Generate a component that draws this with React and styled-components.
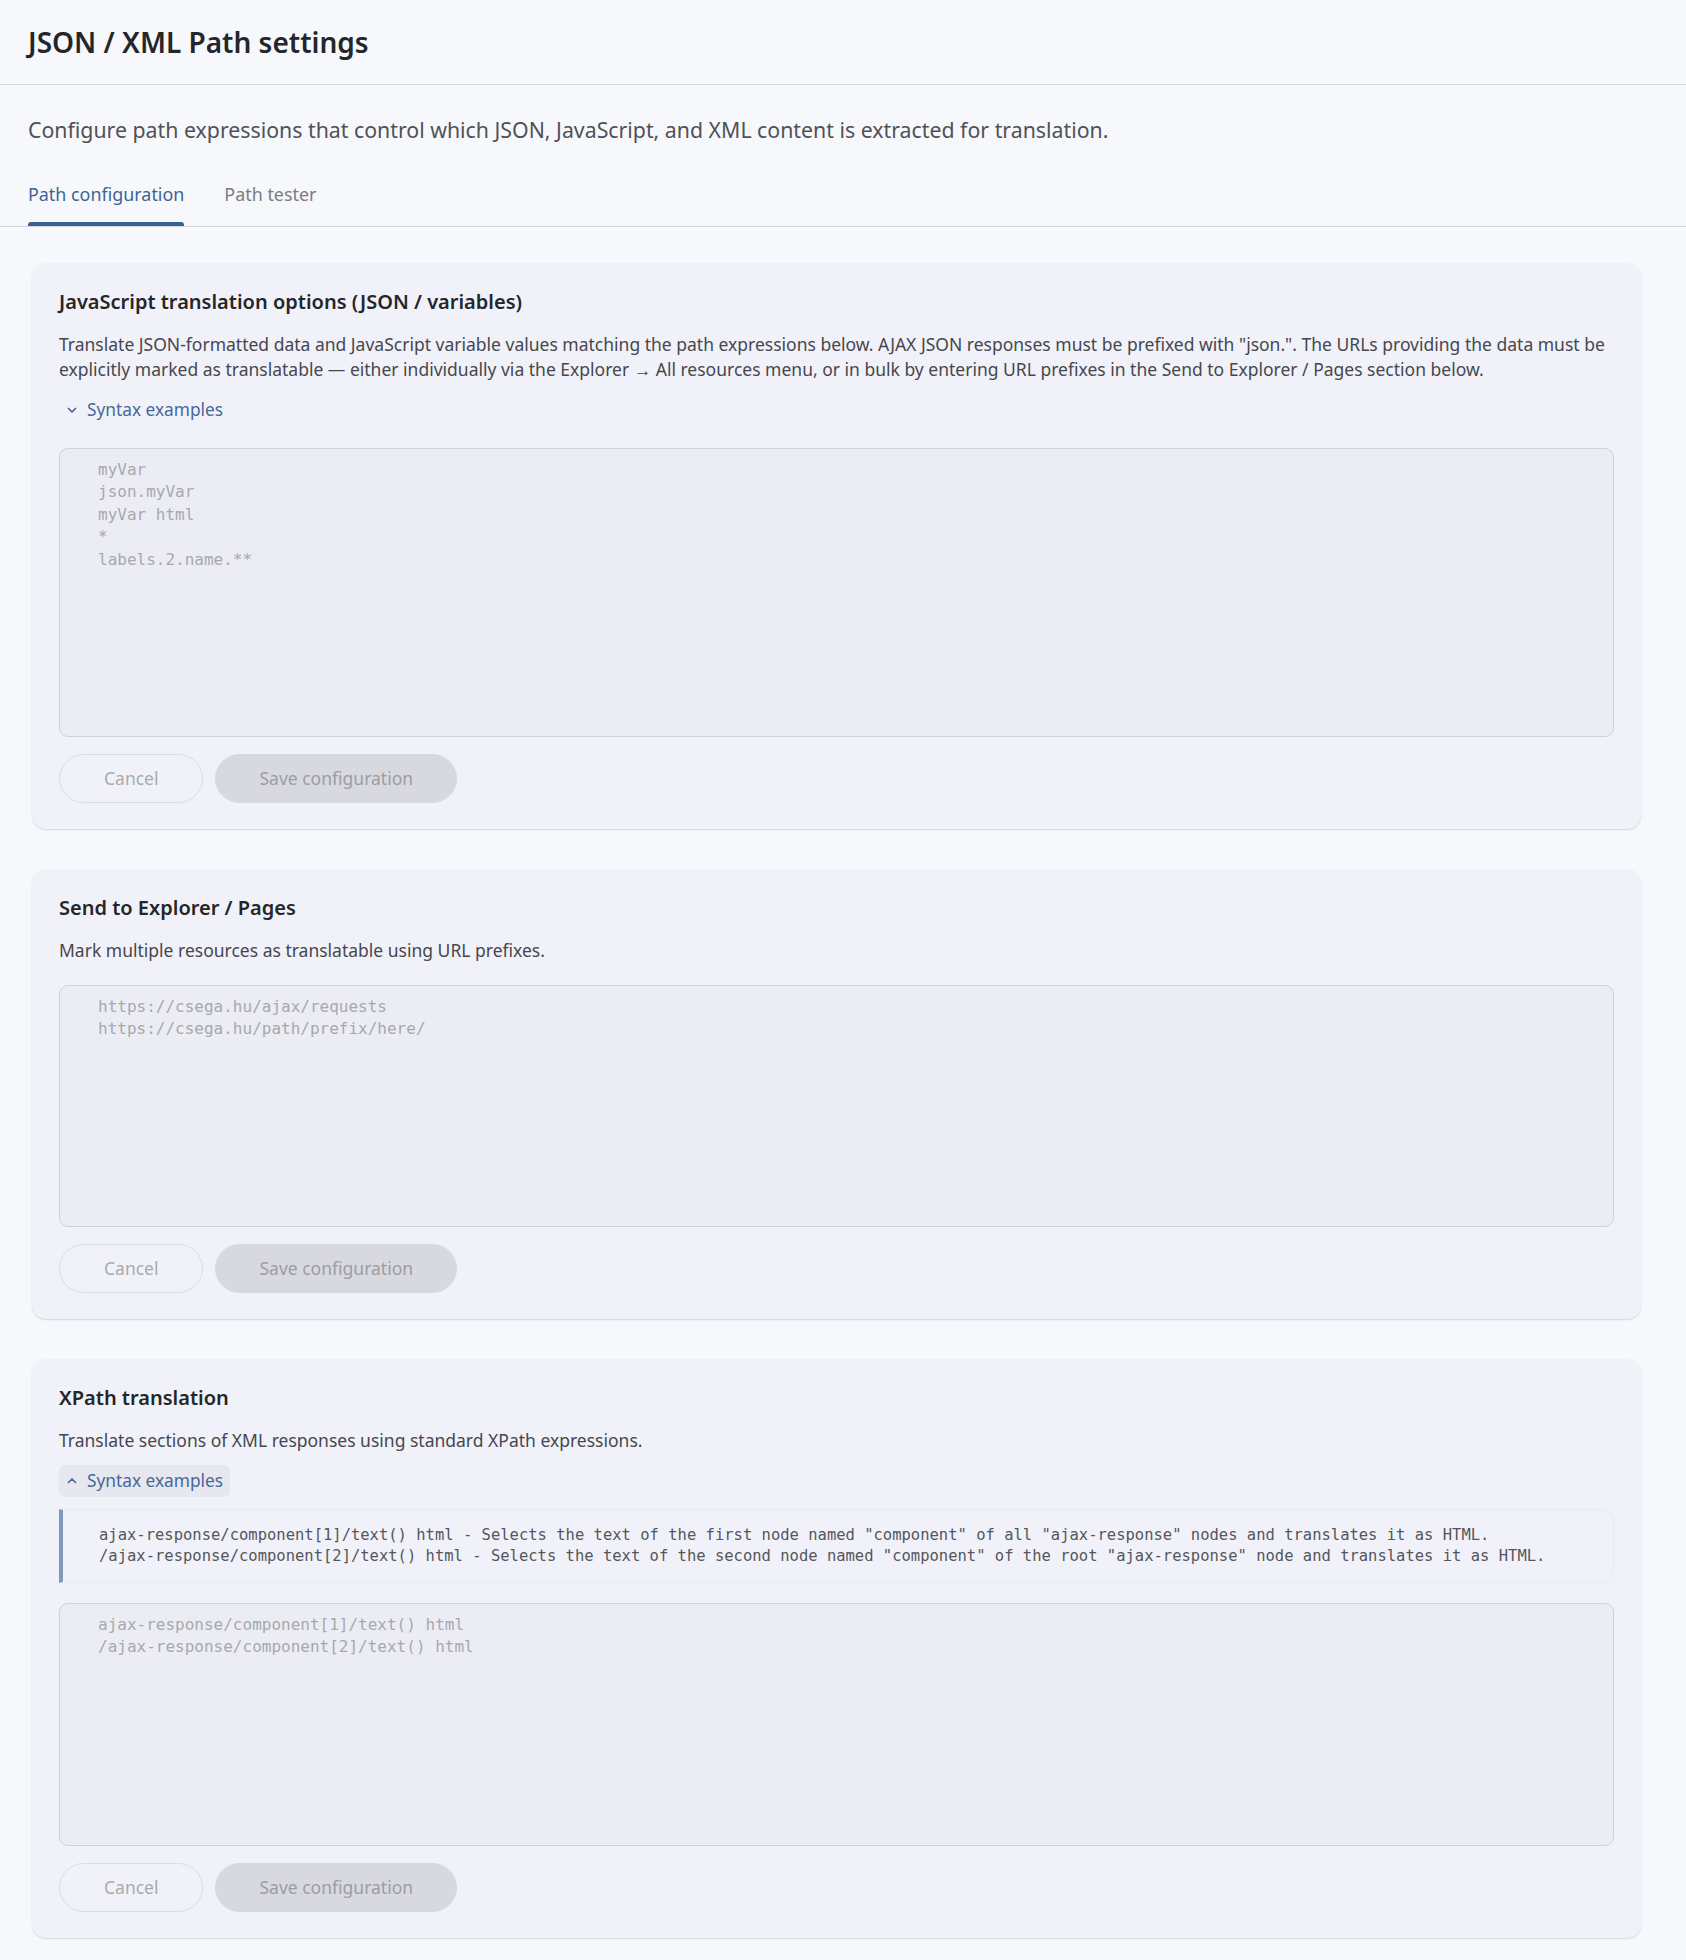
import React from "react";
import styled, { createGlobalStyle } from "styled-components";

const GlobalStyle = createGlobalStyle`
  body {
    margin: 0;
    background: #f7f8fc;
    font-family: "Noto Sans", "Open Sans", sans-serif;
    color: #2b2c30;
  }
  * { box-sizing: border-box; }
`;

const Page = styled.main`
  min-height: 1960px;
  background: #f7f8fc;
  padding-bottom: 23px;
`;

const Header = styled.header`
  height: 85px;
  display: flex;
  align-items: center;
  padding: 0 28px;
  border-bottom: 1.5px solid #d8d9e1;
  h1 {
    margin: 0;
    font-size: 28px;
    font-weight: 600;
    color: #25262a;
  }
`;

const Intro = styled.p`
  margin: 0;
  padding: 30px 28px 0;
  font-size: 21.3px;
  line-height: 30px;
  color: #505157;
`;

const Tabs = styled.nav`
  display: flex;
  gap: 40px;
  padding: 0 28px;
  margin-top: 36.5px;
  border-bottom: 1.5px solid #d3d4dc;
`;

const Tab = styled.button`
  position: relative;
  background: none;
  border: 0;
  padding: 0 0 19px;
  font-family: inherit;
  font-size: 17.9px;
  line-height: 25px;
  color: ${(p) => (p.$active ? "#3f6493" : "#7b7c83")};
  cursor: pointer;
  &::after {
    content: "";
    display: ${(p) => (p.$active ? "block" : "none")};
    position: absolute;
    left: 0;
    right: 0;
    bottom: 0;
    height: 4px;
    border-radius: 3px 3px 0 0;
    background: #3c6190;
  }
`;

const Cards = styled.div`
  display: flex;
  flex-direction: column;
  gap: 40px;
  padding: 36px 45px 0 32px;
`;

const Card = styled.section`
  background: #f1f2f9;
  border-radius: 14px;
  padding: 26px 27px 26px;
  box-shadow: 0 1px 1.5px rgba(40, 42, 60, 0.16);
`;

const CardTitle = styled.h2`
  margin: 0;
  font-size: 20px;
  line-height: 26px;
  font-weight: 600;
  color: #25262a;
`;

const CardText = styled.p`
  margin: 17px 0 0;
  font-size: 17.5px;
  line-height: 25px;
  color: #46474d;
`;

const Toggle = styled.button`
  display: inline-flex;
  align-items: center;
  gap: 9px;
  height: 32px;
  margin-top: 12px;
  padding: 0 7px;
  border: 0;
  border-radius: 6px;
  background: ${(p) => (p.$open ? "#e6e7ef" : "transparent")};
  font-family: inherit;
  font-size: 17.3px;
  color: #46689a;
  cursor: pointer;
  svg {
    width: 12px;
    height: 12px;
  }
`;

const Examples = styled.pre`
  margin: 12px 0 0;
  padding: 15px 36px;
  border: 1px solid #e9eaf2;
  border-left: 4px solid #7f9abb;
  border-radius: 0 14px 14px 0;
  font-family: "DejaVu Sans Mono", "Liberation Mono", monospace;
  font-size: 15.5px;
  line-height: 21px;
  color: #55565c;
  white-space: pre;
`;

const PathInput = styled.textarea`
  display: block;
  width: 100%;
  height: ${(p) => p.$height}px;
  margin-top: 22px;
  padding: 10px 38px;
  background: #ecedf4;
  border: 1.5px solid #d0d1db;
  border-radius: 9px;
  resize: none;
  font-family: "DejaVu Sans Mono", "Liberation Mono", monospace;
  font-size: 16px;
  line-height: 22.5px;
  color: #55565c;
  outline: none;
  ${Examples} + & {
    margin-top: 20px;
  }
  &::placeholder {
    color: #a7a8ae;
  }
`;

const Actions = styled.div`
  display: flex;
  gap: 12px;
  margin-top: 17px;
`;

const PillButton = styled.button`
  height: 49px;
  padding: 0 ${(p) => (p.$primary ? "43px" : "44px")};
  border-radius: 25px;
  font-family: inherit;
  font-size: 17.5px;
  border: 1.5px solid ${(p) => (p.$primary ? "#d8d9e0" : "#dcdde4")};
  background: ${(p) => (p.$primary ? "#d8d9e0" : "transparent")};
  color: ${(p) => (p.$primary ? "#9c9da4" : "#a9aab0")};
  cursor: not-allowed;
`;

const Chevron = ({ up }) => (
  <svg viewBox="0 0 12 12" fill="none" stroke="currentColor" strokeWidth="1.7" strokeLinecap="round" strokeLinejoin="round">
    {up ? <path d="M2.5 7.5 6 4l3.5 3.5" /> : <path d="M2.5 4.5 6 8l3.5-3.5" />}
  </svg>
);

const ConfigCard = ({ title, text, toggle, examples, placeholder, height }) => (
  <Card>
    <CardTitle>{title}</CardTitle>
    <CardText>{text}</CardText>
    {toggle && (
      <div>
        <Toggle $open={toggle === "open"}>
          <Chevron up={toggle === "open"} />
          Syntax examples
        </Toggle>
      </div>
    )}
    {examples && <Examples>{examples}</Examples>}
    <PathInput $height={height} placeholder={placeholder} />
    <Actions>
      <PillButton disabled>Cancel</PillButton>
      <PillButton $primary disabled>Save configuration</PillButton>
    </Actions>
  </Card>
);

export default function App() {
  return (
    <Page>
      <GlobalStyle />
      <Header>
        <h1>JSON / XML Path settings</h1>
      </Header>
      <Intro>
        Configure path expressions that control which JSON, JavaScript, and XML content is extracted for translation.
      </Intro>
      <Tabs>
        <Tab $active>Path configuration</Tab>
        <Tab>Path tester</Tab>
      </Tabs>
      <Cards>
        <ConfigCard
          title="JavaScript translation options (JSON / variables)"
          text={'Translate JSON-formatted data and JavaScript variable values matching the path expressions below. AJAX JSON responses must be prefixed with "json.". The URLs providing the data must be explicitly marked as translatable — either individually via the Explorer → All resources menu, or in bulk by entering URL prefixes in the Send to Explorer / Pages section below.'}
          toggle="closed"
          placeholder={"myVar\njson.myVar\nmyVar html\n*\nlabels.2.name.**"}
          height={289}
        />
        <ConfigCard
          title="Send to Explorer / Pages"
          text="Mark multiple resources as translatable using URL prefixes."
          placeholder={"https://csega.hu/ajax/requests\nhttps://csega.hu/path/prefix/here/"}
          height={242}
        />
        <ConfigCard
          title="XPath translation"
          text="Translate sections of XML responses using standard XPath expressions."
          toggle="open"
          examples={
            'ajax-response/component[1]/text() html - Selects the text of the first node named "component" of all "ajax-response" nodes and translates it as HTML.\n/ajax-response/component[2]/text() html - Selects the text of the second node named "component" of the root "ajax-response" node and translates it as HTML.'
          }
          placeholder={"ajax-response/component[1]/text() html\n/ajax-response/component[2]/text() html"}
          height={243}
        />
      </Cards>
    </Page>
  );
}
